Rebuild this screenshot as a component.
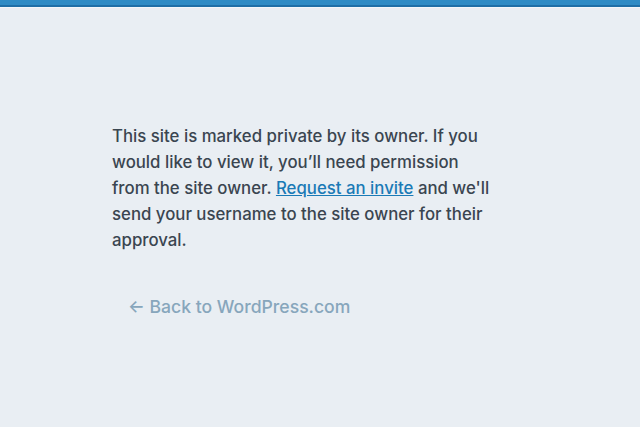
export default function App() {
  return (
    <div className="min-h-[427px] w-full bg-[#e9eef3]" style={{ fontFamily: 'Inter, "Open Sans", sans-serif' }}>
      <div className="h-[5px] bg-[#2e8bc5]" />
      <div className="h-[2px] bg-[#1e6ea6]" />
      <div className="h-[1px] bg-[#f3f6f9]" />
      <div className="pl-[112px] pt-[115px] pr-[140px]">
        <p className="text-[16.8px] leading-[26px] text-[#3a4550] w-[384px] font-[450]">
          This site is marked private by its owner. If you would like to view it, you’ll need permission from the site owner.{' '}
          <a className="text-[#1a7ab6] underline" href="#">Request an invite</a> and we'll send your username to the site owner for their approval.
        </p>
        <div className="mt-[41px] pl-[16px] text-[17.6px] leading-[26px] text-[#87a6bc] font-[450]">← Back to WordPress.com</div>
      </div>
    </div>
  );
}
